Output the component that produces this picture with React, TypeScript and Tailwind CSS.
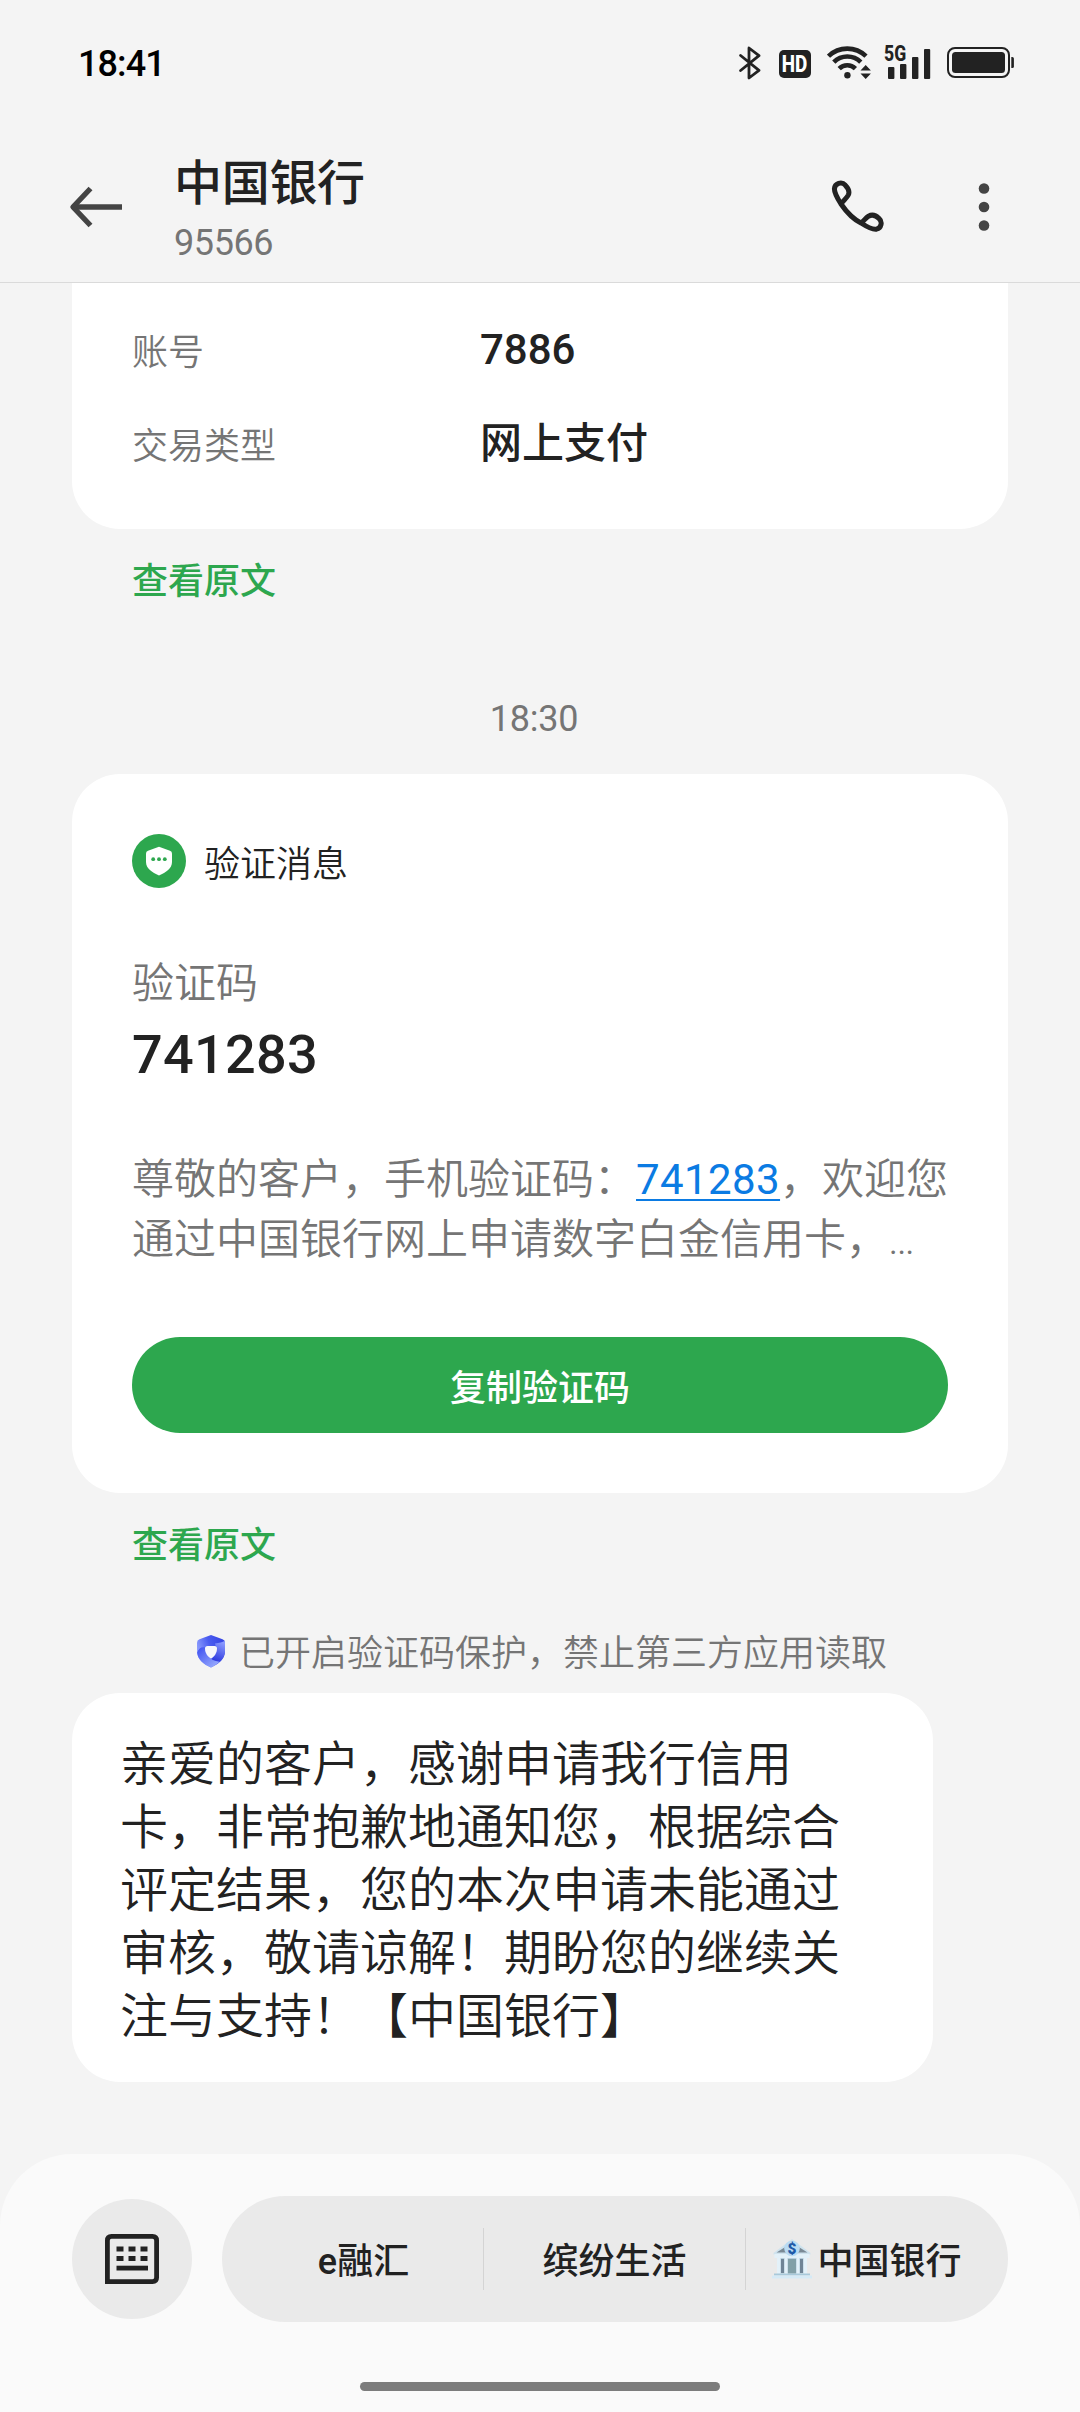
import React from "react";

function BluetoothIcon() {
  return (
    <svg width="22" height="34" viewBox="0 0 22 34" fill="none" stroke="#222" strokeWidth="2.8" strokeLinejoin="round" strokeLinecap="round">
      <path d="M1.6 9.5 L20 24.3 L10 32 V2 L20 9.7 L1.6 24.5" />
    </svg>
  );
}

function WifiIcon() {
  return (
    <svg width="44" height="34" viewBox="0 0 44 34" fill="none" stroke="#222" strokeWidth="4.6">
      <path d="M1.5 11.2 A27 27 0 0 1 39 11.2" />
      <path d="M6.8 17.2 A19 19 0 0 1 33.8 17.2" />
      <path d="M12.2 23.6 A11.5 11.5 0 0 1 28.4 23.6" />
      <circle cx="20.4" cy="30.3" r="3.2" fill="#222" stroke="none" />
      <path d="M33.5 25.4 L38.7 19.9 L43.9 25.4 Z M33.5 28.6 L38.7 34 L43.9 28.6 Z" fill="#222" stroke="none" />
    </svg>
  );
}

function SignalIcon() {
  return (
    <svg width="48" height="34" viewBox="0 0 48 34" fill="#222">
      <rect x="4" y="21" width="6.4" height="12" rx="1" />
      <rect x="16" y="18" width="6.4" height="15" rx="1" />
      <rect x="28" y="11" width="6.4" height="22" rx="1" />
      <rect x="40" y="3" width="6.2" height="30" rx="1" />
    </svg>
  );
}

function BatteryIcon() {
  return (
    <svg width="68" height="32" viewBox="0 0 68 32" fill="none">
      <rect x="1" y="1" width="61" height="29" rx="7" stroke="#222" strokeWidth="2" />
      <rect x="5" y="5" width="53" height="21" rx="3.5" fill="#222" />
      <path d="M64.3 10 h1 a1.6 1.6 0 0 1 1.6 1.6 v7.8 a1.6 1.6 0 0 1 -1.6 1.6 h-1 Z" fill="#222" />
    </svg>
  );
}

function StatusBar() {
  return (
    <div className="flex h-[126px] w-full shrink-0 items-center pl-[78px] pr-[65px]">
      <span className="mt-[2px] text-[36px] font-medium leading-[42px] tracking-[-0.9px] text-black">18:41</span>
      <div className="ml-auto flex items-center">
        <BluetoothIcon />
        <span className="ml-[18px] mt-[2px] flex h-[28px] w-[32px] items-center justify-center rounded-[5px] bg-[#222]">
          <span className="origin-center scale-x-[0.82] text-[23px] font-extrabold leading-none text-white">HD</span>
        </span>
        <span className="ml-[16px] mt-[-2px]"><WifiIcon /></span>
        <span className="relative ml-[13px]">
          <SignalIcon />
          <span className="absolute left-0 top-[-1px] origin-left scale-x-[0.8] bg-[#f4f4f4] text-[22px] font-extrabold leading-[18px] text-[#222]">5G</span>
        </span>
        <span className="ml-[15px]"><BatteryIcon /></span>
      </div>
    </div>
  );
}

function Header() {
  return (
    <header className="flex h-[157px] w-full shrink-0 items-start border-b border-[#dadada]">
      <svg className="ml-[69px] mt-[60px]" width="54" height="42" viewBox="0 0 54 42" fill="none" stroke="#444" strokeWidth="5.4">
        <path d="M53 21 H4" />
        <path d="M21.5 2.5 L4 21 L21.5 39.5" strokeLinejoin="round" />
      </svg>
      <div className="ml-[51px] mt-[28px] flex flex-col">
        <h1 className="text-[48px] font-medium leading-[60px] tracking-[-0.3px] text-[#222]">中国银行</h1>
        <span className="mt-[8px] text-[36px] leading-[42px] tracking-[-0.4px] text-[#757575]">95566</span>
      </div>
      <svg className="ml-auto mt-[54px]" width="54" height="54" viewBox="0 0 54 54" fill="none" stroke="#222" strokeWidth="5" strokeLinejoin="round">
        <path d="M11 24 C6.500 17 4.400 11.500 4.400 8.800 A6.200 6.200 0 0 1 15.300 5.200 C18.400 8.400 19.700 12 18.300 15 C16.800 18 13.500 20.500 11 24 C16.500 32 23 39 31 43 C38 47.500 43.500 49.800 46.500 49.200 A6.200 6.200 0 0 0 49 38.500 C46 35.500 42 34.300 38.500 36.200 C35.500 38 34 41 31 43" />
      </svg>
      <svg className="ml-[94px] mr-[90px] mt-[55px]" width="12" height="52" viewBox="0 0 12 52" fill="#444">
        <circle cx="6" cy="7.500" r="5.300" />
        <circle cx="6" cy="26" r="5.300" />
        <circle cx="6" cy="44.500" r="5.300" />
      </svg>
    </header>
  );
}

function DetailRow({ label, value }: { label: string; value: string }) {
  return (
    <div className="flex h-[60px] items-center">
      <span className="w-[348px] pt-[5px] text-[36px] font-[350] text-[#757575]">{label}</span>
      <span className="pb-[2px] text-[42px] font-medium text-[#222]">{value}</span>
    </div>
  );
}

function OriginalLink() {
  return <a className="ml-[132px] self-start text-[36px] font-medium leading-[48px] text-[#2da74e]">查看原文</a>;
}

function MessageShield() {
  return (
    <svg width="54" height="54" viewBox="0 0 54 54">
      <circle cx="27" cy="27" r="27" fill="#2da74e" />
      <path d="M27 12.800 L38 16.800 Q40 17.600 40 19.500 V28 C40 34.500 34 38.500 27 41.500 C20 38.500 14 34.500 14 28 V19.500 Q14 17.600 16 16.800 Z" fill="#fff" />
      <circle cx="21.200" cy="25.200" r="1.900" fill="#2da74e" />
      <circle cx="27" cy="25.200" r="1.900" fill="#2da74e" />
      <circle cx="32.800" cy="25.200" r="1.900" fill="#2da74e" />
    </svg>
  );
}

function ProtectionIcon() {
  return (
    <svg width="32" height="34" viewBox="0 0 32 34">
      <defs>
        <linearGradient id="guardTop" x1="0" y1="0.6" x2="1" y2="0.2">
          <stop offset="0" stopColor="#98a8ff" />
          <stop offset="0.5" stopColor="#4a5cf0" />
          <stop offset="1" stopColor="#3443e2" />
        </linearGradient>
        <linearGradient id="guardRight" x1="0.6" y1="0" x2="0.3" y2="1">
          <stop offset="0" stopColor="#8b9bff" />
          <stop offset="1" stopColor="#2a35dc" />
        </linearGradient>
        <linearGradient id="guardLeft" x1="0" y1="0" x2="1" y2="1">
          <stop offset="0" stopColor="#3b4df0" />
          <stop offset="1" stopColor="#a3b6ff" />
        </linearGradient>
      </defs>
      <path d="M16 1 L27.500 5.200 Q30 6.200 30 8.500 V17 C30 25 24 30 16 33.500 C8 30 2 25 2 17 V8.500 Q2 6.200 4.500 5.200 Z" fill="url(#guardTop)" />
      <path d="M20 9.500 C24 9 28 8.500 29.600 6.800 Q30 7.600 30 8.500 V17 C30 21.500 28 25 24.500 27.800 C22 28.500 18.500 27.500 16.500 25 C20 22 22.500 17 20 9.500 Z" fill="url(#guardRight)" />
      <path d="M2.100 18.500 C4 13.500 7 12.500 10.500 13.500 C10.500 20 14 26.500 24.500 27.800 C22 30 19.500 32 16 33.500 C8.500 30.500 2.800 25.500 2.100 18.500 Z" fill="url(#guardLeft)" />
      <path d="M12.500 12 H19.500 Q22 12 22 14.500 C22 19 19.500 22.500 16 24.500 C12.500 22.500 10 19 10 14.500 Q10 12 12.500 12 Z" fill="#f7f7fb" />
    </svg>
  );
}

function KeyboardIcon() {
  return (
    <svg width="54" height="50" viewBox="0 0 54 50" fill="#222">
      <path d="M2.400 47.600 V6.500 Q2.400 2.400 6.500 2.400 H47.500 Q51.600 2.400 51.600 6.500 V43.500 Q51.600 47.600 47.500 47.600 Z" fill="none" stroke="#222" strokeWidth="4.800" />
      {[11.5, 23.5, 35.5].map((x) => (
        <React.Fragment key={x}>
          <rect x={x} y="12.500" width="7" height="5" />
          <rect x={x} y="22" width="7" height="5" />
        </React.Fragment>
      ))}
      <rect x="11.500" y="31.700" width="31.500" height="4.800" />
    </svg>
  );
}

function BankIcon() {
  return (
    <svg width="42" height="42" viewBox="0 0 42 42">
      <path d="M1.500 15 L20 1 L38.500 15 V16.500 H1.500 Z" fill="#cfe3ee" />
      <path d="M4.500 14.500 L14 8.500 V14.500 Z M26 8.500 L35.500 14.500 H26 Z" fill="#7a8a96" />
      <rect x="2.500" y="16" width="35" height="4" fill="#e3f1f9" />
      <rect x="5" y="20" width="30" height="15.500" fill="#b4cddc" />
      <path d="M9 21 h3 v14 h-3 Z M28 21 h3 v14 h-3 Z" fill="#6f8496" />
      <path d="M5 20 h3.500 v16 h-3.500 Z M12.500 20 h3 v16 h-3 Z M24.500 20 h3 v16 h-3 Z M31.500 20 h3.500 v16 h-3.500 Z" fill="#e3f1f9" />
      <rect x="16" y="21" width="8" height="14.500" fill="#82a0a8" />
      <rect x="2" y="35.500" width="36" height="2" fill="#a9c9da" />
      <rect x="0" y="37.500" width="40" height="3" fill="#d5eaf6" />
      <circle cx="20" cy="10.500" r="7.800" fill="#b9dbf3" />
      <text x="20" y="16" textAnchor="middle" fontFamily="Roboto, sans-serif" fontWeight="900" fontSize="15.500" fill="#1f5aa8">$</text>
    </svg>
  );
}

function BottomBar() {
  return (
    <footer className="mt-auto flex h-[258px] w-full shrink-0 flex-col rounded-t-[72px] bg-[#fafafa]">
      <div className="mt-[42px] flex items-center pl-[72px]">
        <button className="flex size-[120px] items-center justify-center rounded-full bg-[#eaeaea]">
          <KeyboardIcon />
        </button>
        <nav className="ml-[30px] grid h-[126px] w-[786px] grid-cols-3 items-center rounded-full bg-[#eaeaea] text-[36px] font-medium text-[#222]">
          <span className="flex h-[62px] items-center justify-center border-r border-[#d4d4d4] pl-[22px] pt-[5px]">e融汇</span>
          <span className="flex h-[62px] items-center justify-center border-r border-[#d4d4d4] pt-[5px]">缤纷生活</span>
          <span className="flex items-center justify-center pr-[20px]">
            <BankIcon />
            <span className="ml-[3px] pt-[5px]">中国银行</span>
          </span>
        </nav>
      </div>
      <div className="mx-auto mt-[60px] h-[9px] w-[360px] rounded-full bg-[#7c7c7c]" />
    </footer>
  );
}

export default function App() {
  return (
    <div lang="zh-CN" className="flex h-[2412px] w-[1080px] flex-col overflow-hidden bg-[#f4f4f4] font-[Roboto,'Noto_Sans_CJK_SC',sans-serif] [text-spacing-trim:space-all]">
      <StatusBar />
      <Header />
      <main className="flex flex-col">
        <section className="mx-[72px] flex h-[246px] flex-col gap-[34px] rounded-b-[48px] bg-white px-[60px] pt-[37px]">
          <DetailRow label="账号" value="7886" />
          <DetailRow label="交易类型" value="网上支付" />
        </section>
        <div className="mt-[29px] flex flex-col">
          <OriginalLink />
        </div>
        <time className="mt-[92px] pr-[12px] text-center text-[36px] leading-[42px] tracking-[-0.2px] text-[#757575]">18:30</time>
        <section className="mx-[72px] mt-[34px] flex h-[719px] flex-col rounded-[48px] bg-white px-[60px] pt-[60px]">
          <div className="flex h-[54px] items-center">
            <MessageShield />
            <span className="ml-[18px] mt-[8px] text-[36px] font-[350] leading-[54px] text-[#222]">验证消息</span>
          </div>
          <span className="mt-[66px] text-[42px] font-[350] leading-[60px] text-[#757575]">验证码</span>
          <span className="mt-[9px] text-[54px] font-medium leading-[64px] tracking-[0.3px] text-[#222]">741283</span>
          <p className="mt-[63px] whitespace-nowrap text-[42px] font-[350] leading-[60px] text-[#757575]">
            尊敬的客户，手机验证码：<span className="font-normal tracking-[0.4px] text-[#0b7be3] underline decoration-[2px] underline-offset-[5px]">741283</span>，欢迎您
            <br />
            通过中国银行网上申请数字白金信用卡，…
          </p>
          <button className="mt-[67px] h-[96px] rounded-full bg-[#2da74e] pt-[7px] text-[36px] font-medium text-white">复制验证码</button>
        </section>
        <div className="mt-[29px] flex flex-col">
          <OriginalLink />
        </div>
        <div className="mt-[57px] flex h-[48px] items-center pl-[195px]">
          <ProtectionIcon />
          <span className="ml-[12px] pt-[5px] text-[36px] font-[350] text-[#757575]">已开启验证码保护，禁止第三方应用读取</span>
        </div>
        <p className="ml-[72px] mt-[18px] h-[389px] w-[861px] rounded-[48px] bg-white pl-[48px] pt-[40px] text-[48px] font-[350] leading-[63px] text-[#222]">
          亲爱的客户，感谢申请我行信用
          <br />
          卡，非常抱歉地通知您，根据综合
          <br />
          评定结果，您的本次申请未能通过
          <br />
          审核，敬请谅解！期盼您的继续关
          <br />
          注与支持！【中国银行】
        </p>
      </main>
      <BottomBar />
    </div>
  );
}
